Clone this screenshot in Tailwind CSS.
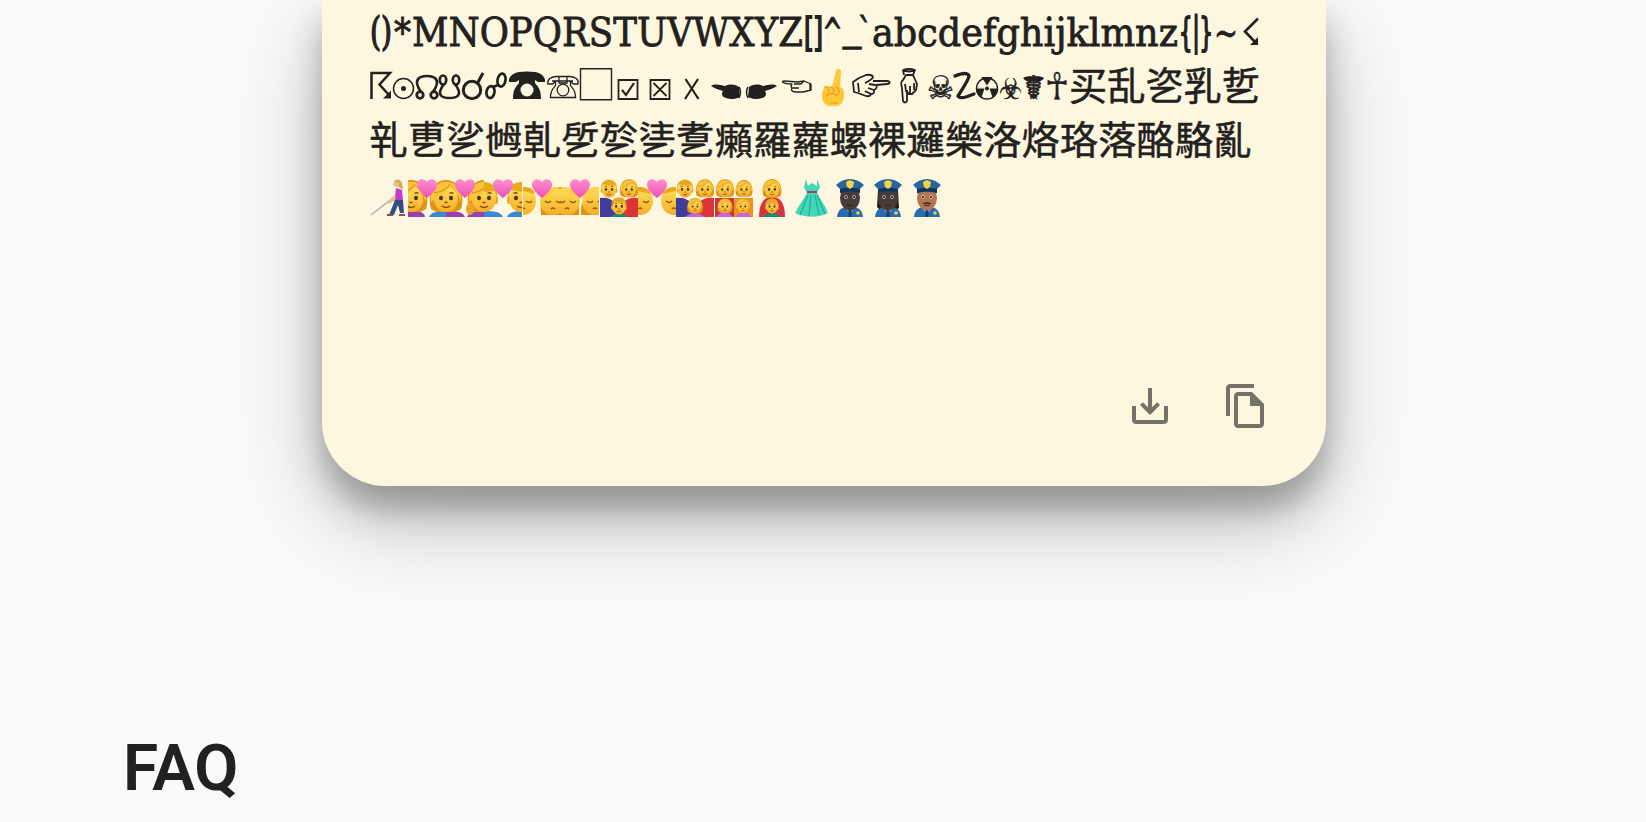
<!DOCTYPE html>
<html lang="en">
<head>
<meta charset="utf-8">
<title>FAQ</title>
<script src="https://cdn.jsdelivr.net/npm/@tailwindcss/browser@4"></script>
</head>
<body class="h-[822px] overflow-hidden bg-[#fafafa] font-[Roboto,sans-serif] text-[#212121]">
<main>
<section class="ml-[322px] flex h-[486px] w-[1004px] flex-col rounded-b-[64px] bg-[#fef7e0] px-12 text-[#22211e] shadow-[0_34px_90px_rgba(0,0,0,0.25),0_24px_30px_rgba(0,0,0,0.25)]">
  <svg class="block h-[60px] w-[908px] shrink-0 overflow-visible font-['DejaVu_Serif']" fill="currentColor" stroke="currentColor" stroke-width=".8" font-size="38.4">
    <text x="0" y="45" stroke-width="1.500" textLength="22" lengthAdjust="spacingAndGlyphs">()</text>
    <text x="24" y="46" textLength="17" lengthAdjust="spacingAndGlyphs">*</text>
    <text x="42" y="46" textLength="391" lengthAdjust="spacingAndGlyphs">MNOPQRSTUVWXYZ</text>
    <text x="434" y="45" stroke-width="1.900" textLength="19" lengthAdjust="spacingAndGlyphs">[]</text>
    <text x="453" y="46" stroke-width="1.500" textLength="19" lengthAdjust="spacingAndGlyphs">^</text>
    <text x="473" y="40" stroke-width="1.700" textLength="18" lengthAdjust="spacingAndGlyphs">_</text>
    <text x="488" y="46" stroke-width="1.200" textLength="14" lengthAdjust="spacingAndGlyphs">`</text>
    <text x="502" y="46" textLength="306" lengthAdjust="spacingAndGlyphs">abcdefghijklmnz</text>
    <text x="809" y="45" stroke-width="2.200" textLength="34" lengthAdjust="spacingAndGlyphs">{|}</text>
    <text x="844" y="46" textLength="24" lengthAdjust="spacingAndGlyphs">~</text>
    <path d="M888 18.500L875 31.500L885 42" fill="none" stroke-width="2.600"/><path d="M880 45l8-8v8z" stroke="none"/>
  </svg>
  <svg class="block h-[54px] w-[908px] shrink-0 overflow-visible font-['DejaVu_Sans']" fill="currentColor" font-size="36">
    <path d="M1.500 39V13H20L9.500 24.500L19 35" fill="none" stroke="currentColor" stroke-width="2.500"/><path d="M13 38.500l8-8v8z"/>
    <circle cx="33.500" cy="28.500" r="10" fill="none" stroke="currentColor" stroke-width="1.500"/><circle cx="33.500" cy="28.500" r="2.500"/>
    <g fill="none" stroke="currentColor" stroke-width="2.700"><circle cx="50" cy="35" r="3.300"/><circle cx="64" cy="35" r="3.300"/><path d="M51 32C42 19 50 16 57 16S72 19 63 32"/><ellipse cx="73" cy="20" rx="3.200" ry="4.500"/><ellipse cx="86" cy="20" rx="3.200" ry="4.500"/><path d="M74 24C65 36 73 38 79.500 38S94 36 85 24"/><circle cx="102" cy="30" r="8.700" stroke-width="3"/><path d="M107 24L113 13" stroke-width="3"/><ellipse cx="120.500" cy="32" rx="4" ry="6" transform="rotate(10 120 32)"/><ellipse cx="131.500" cy="20" rx="4" ry="6.500" transform="rotate(10 131 20)"/><path d="M123 27L128 25"/></g>
    <path d="M143 39c0-10 3-12 6-16v-3l-3 2h-7c-1-5 4-9 10-10 5-.8 11-.8 16 0 6 1 11 5 10 10h-7l-3-2v3c3 4 6 6 6 16z"/><circle cx="157" cy="30" r="6.500" fill="#fef7e0"/>
    <g fill="none" stroke="currentColor" stroke-width="1.300"><path d="M180.500 37.500c0-8 3-9 5-12v-4l-3 2.500h-4.500c-1-5 3-7 8-7.500h14c5 .5 9 2.500 8 7.500h-4.500l-3-2.500v4c2 3 5 4 5 12zM189 17v6h8v-6M182 21h21"/><circle cx="193" cy="30" r="5.800"/></g>
    <path d="M210.500 8.800h31v31h-31z" fill="none" stroke="currentColor" stroke-width="1.400"/>
    <g fill="none" stroke="currentColor" stroke-width="1.800"><path d="M248.500 20h19v19h-19zM280.500 20h19v19h-19zM283.500 23l13 13M296.500 23l-13 13"/><path d="M252 30l4 5 8-12M315.500 19l13 20M328 19l-13 20" stroke-width="2.200"/></g>
    <path d="M341 26c4-3 9-1 14 0 5-2 9-2 14 1l1 10c-4 2-9 3-14 1-4-1-5-4-3-7-4-1-9-3-12-5z"/><path d="M369 27q3 5 0 11" fill="none" stroke="currentColor" stroke-width="1.500"/>
    <path d="M407 26c-4-3-9-1-14 0-5-2-9-2-14 1l-1 10c4 2 9 3 14 1 4-1 5-4 3-7 4-1 9-3 12-5z"/><path d="M378 27q-3 5 0 11" fill="none" stroke="currentColor" stroke-width="1.500"/>
    <g fill="none" stroke="currentColor" stroke-width="1.300" stroke-linejoin="round"><path d="M422 24c-10 0-11-3-8-3l14 1 6-1 7 3v6l-8 2h-8q-5-1-3-4-2-2 0-4zM422 28h7M424 24h7l3-3M440 23v8"/></g>
    <path d="M454 28c3-2 5-2 8-1l4-16c1-3 5-2 5 0l-1 16c3 1 4 3 4 7 0 7-2 11-7 12h-9c-6-2-8-11-4-18z" fill="#ffc735"/><path d="M454 27c3-1 5 1 5 5M460 27c3 0 4 2 4 5M456 36c3-3 8-4 11 0M466 27c5 2 3 7 1 8M460 43h8" fill="none" stroke="#e09a20" stroke-width="1.100"/>
    <g fill="none" stroke="currentColor" stroke-width="1.800" stroke-linejoin="round"><path d="M503 21l14 0c4 0 3 3 0 3l-11 1q2 3-2 5 1 4-3 4-1 3-5 2l-8-3-4-1-1-10 6-4 7-3q6-1 7 2 0 2-8 6M505 25l-6-1M504 30l-6-2M501 34l-6-3M488 23l1 9"/></g>
    <g fill="none" stroke="currentColor" stroke-width="1.800" stroke-linejoin="round"><path d="M537 30v11q-2 3-4 0l-1-13q-2-6 1-8l3-5h7l4 9-1 6-4 4-3 0-3-3-1-7M540 33v-7M544 30v-7M534 15l-1-5q6-2 12 0l-2 5M533 10q6 3 12 0"/></g>
    <text x="557" y="39" font-size="32" textLength="27" lengthAdjust="spacingAndGlyphs" stroke="currentColor" stroke-width=".5">☠</text>
    <path d="M585 16q12-5 14 0 0 3-11 20 2 4 16-2" fill="none" stroke="currentColor" stroke-width="3.300" stroke-linecap="round" stroke-linejoin="round"/>
    <circle cx="617" cy="28.500" r="10.500" fill="none" stroke="currentColor" stroke-width="1.500"/><circle cx="617" cy="28.500" r="2"/><path d="M617 25.500l-5.500-8.500h11zM614.500 28.500h-8.500q0 5 5.500 9zM619.500 28.500h8.500q0 5-5.500 9z"/>
    <text x="629" y="39" font-size="29" textLength="23" lengthAdjust="spacingAndGlyphs" stroke="currentColor" stroke-width=".5">☣</text>
    <text x="652" y="39" font-size="33" textLength="23" lengthAdjust="spacingAndGlyphs" stroke="currentColor" stroke-width=".7">☤</text>
    <text x="675" y="39" font-size="37" textLength="24" lengthAdjust="spacingAndGlyphs" stroke="currentColor" stroke-width=".4">☥</text>
    <text x="699" y="40" class="font-['Noto_Sans_CJK_SC']" stroke="currentColor" stroke-width=".5" font-size="38.200" textLength="191" lengthAdjust="spacing">买乱乲乳乴</text>
  </svg>
  <svg class="block h-[54px] w-[908px] shrink-0 overflow-visible font-['Noto_Sans_CJK_SC']" fill="currentColor" stroke="currentColor" stroke-width=".5" font-size="38.200">
    <text x="-.5" y="40" textLength="882" lengthAdjust="spacing">乵乶乷乸乹乺乻乼乽癩羅蘿螺裸邏樂洛烙珞落酪駱亂</text>
  </svg>
  <svg class="mt-[11px] block h-[38px] w-[572px] shrink-0">
    <defs>
      <linearGradient id="skin" x2="0" y2="1"><stop stop-color="#ffe05c"/><stop offset="1" stop-color="#f6ae27"/></linearGradient>
      <linearGradient id="pink" x2="0" y2="1"><stop stop-color="#ff8fce"/><stop offset="1" stop-color="#ed4fb4"/></linearGradient>
      <g id="heart"><path d="M10 19C4 14 0 10 0 5.500 0 0 7-2 10 3c3-5 10-3 10 2.500C20 10 16 14 10 19z" fill="url(#pink)"/></g>
      <g id="face"><ellipse cx="0" cy="0" rx="12" ry="13" fill="url(#skin)"/><ellipse cx="-5" cy="-1" rx="2" ry="2.300" fill="#4b3217"/><ellipse cx="5" cy="-1" rx="2" ry="2.300" fill="#4b3217"/><path d="M-4 7q4 3 8 0M-1.500 3.500h3M-7.500-5.500q2-1.500 4 0M3.500-5.500q2-1.500 4 0" stroke="#8b4d0f" stroke-width="1.500" fill="none"/></g>
      <g id="woman"><path d="M-15 10C-19-2-14-19 0-19S19-2 15 10L9 13H-9z" fill="#df9418"/><use href="#face"/><path d="M-15 3C-18-24 18-24 15 3Q12-7 5-13-2-5-15 3z" fill="#f9c33a"/><path d="M-12-6Q0-8 4-15" stroke="#d58b19" fill="none"/></g>
      <g id="man"><ellipse cx="-12" cy="1" rx="2" ry="4" fill="#eca323"/><ellipse cx="12" cy="1" rx="2" ry="4" fill="#eca323"/><use href="#face"/><path d="M-13-2C-16-22 16-22 13-2L10-8Q-1-6-10-9z" fill="#e8a91f"/></g>
      <g id="kiss"><ellipse cx="0" cy="0" rx="13" ry="14" fill="url(#skin)"/><path d="M-8 0q3 3 6 0M3 0q3 3 6 0M-2 8q2-2 4 0" stroke="#98580e" stroke-width="1.600" fill="none"/></g>
      <g id="cop"><path d="M1 38C2 29 7 28 14 28s12 1 13 10z" fill="#286cad"/><path d="M9 29l5 6 5-6z" fill="#8cc6ee"/><path d="M14 31v7" stroke="#123d6c" stroke-width="3"/><ellipse cx="14" cy="19" rx="10" ry="12.500" fill="currentColor"/><g fill="#eee"><circle cx="10" cy="18" r="1.700"/><circle cx="18" cy="18" r="1.700"/></g><circle cx="10" cy="18" r="1.100" fill="#180f0c"/><circle cx="18" cy="18" r="1.100" fill="#180f0c"/><path d="M11 26q3 1 6 0" stroke="#351b16" fill="none"/><path d="M0 6C4 2 9 0 14 0s10 2 14 6l-4 4v4q-10-3-20 0v-4z" fill="#2865a0"/><path d="M4 10q10-3 20 0v4q-10-3-20 0z" fill="#123456"/><path d="M10 3l4-2 4 2-1 5-3 2-3-2z" fill="#f5d340"/><circle cx="22" cy="34" r="1.800" fill="#f1cf43"/></g>
      <clipPath id="c1"><path d="M38 0h38v38H38z"/></clipPath><clipPath id="c2"><path d="M76 0h38v38H76z"/></clipPath><clipPath id="c3"><path d="M114 0h38v38h-38z"/></clipPath>
      <clipPath id="c4"><path d="M153 0h37v38h-37z"/></clipPath><clipPath id="c5"><path d="M190 0h39v38h-39z"/></clipPath><clipPath id="c6"><path d="M268 0h38v38h-38z"/></clipPath>
      <clipPath id="c7"><path d="M306 0h38v38h-38z"/></clipPath><clipPath id="c8"><path d="M345 0h38v38h-38z"/></clipPath><clipPath id="c9"><path d="M230 0h38v38h-38z"/></clipPath>
    </defs>
    <path d="M1 36L24 18" stroke="#a7a7a7" stroke-width="1.200"/><path d="M17 23l7-6 3-8 3 2-2 9-9 5z" fill="#e9bf91"/><path d="M26 9l6 2 1 11-8 1z" fill="#c73ad2"/><path d="M25 21h8l1 13h-4l-2-8-4 10h-5z" fill="#344f7f"/><circle cx="27" cy="4.500" r="3.500" fill="#e9bf91"/><path d="M24 2q5-4 8 2l1 7-4-3V4z" fill="#d4aa54"/><path d="M17 36h6M29 36h6" stroke="#8a4c5a" stroke-width="2"/>
    <g clip-path="url(#c1)"><path d="M38 32q17-1 17 6H38z" fill="#993eb4"/><path d="M59 38q2-6 17-6v6z" fill="#3a89d9"/><use href="#woman" x="41" y="20"/><use href="#woman" x="76" y="20"/></g>
    <g clip-path="url(#c2)"><path d="M76 32q17-1 19 6H76zM97 38q2-6 17-6v6z" fill="#993eb4"/><use href="#woman" x="76" y="20"/><use href="#woman" x="114" y="20"/><ellipse cx="100" cy="30" rx="4" ry="6" fill="#eaa529"/></g>
    <g clip-path="url(#c3)"><path d="M114 32q17-1 19 6h-19zM137 38q2-6 15-6v6z" fill="#3a89d9"/><use href="#man" x="114" y="20"/><use href="#man" x="151" y="20"/></g>
    <use href="#heart" x="47" y="0"/><use href="#heart" x="85" y="0"/><use href="#heart" x="123" y="0"/>
    <g clip-path="url(#c4)"><use href="#kiss" x="153" y="22"/><path d="M153 8q10-1 12 7l-12-3z" fill="#e8a91f"/><path d="M171 36q-3-28 19-28v28z" fill="#df9418"/><use href="#kiss" x="183" y="22"/><path d="M171 22q3-15 19-14l-6 5z" fill="#ffd24a"/></g>
    <g clip-path="url(#c5)"><path d="M190 8q21 0 19 28h-19zM211 36q-1-28 20-28v28z" fill="#df9418"/><use href="#kiss" x="197" y="22"/><use href="#kiss" x="225" y="22"/><path d="M190 8q16 0 18 14l-12-9zM212 22q3-15 19-14l-7 6z" fill="#ffd24a"/></g>
    <use href="#heart" x="162" y="0"/><use href="#heart" x="200" y="0"/>
    <g clip-path="url(#c9)"><path d="M230 19q18-2 19 19h-19z" fill="#413b9e"/><path d="M249 38q0-21 19-19v19z" fill="#da3439"/><g transform="translate(239 11) scale(.6)"><use href="#man"/></g><g transform="translate(259 11) scale(.56)"><use href="#woman"/></g><path d="M240 38q9-8 18 0z" fill="#168c74"/><g transform="translate(249 28) scale(.57)"><use href="#man"/></g></g>
    <g clip-path="url(#c6)"><use href="#kiss" x="270" y="22"/><use href="#kiss" x="304" y="22"/><path d="M268 8q10-1 13 7l-13-3zM292 15q5-8 14-7v4z" fill="#e8a91f"/></g><use href="#heart" x="277" y="0"/>
    <g clip-path="url(#c7)"><path d="M306 19q18-2 19 19h-19z" fill="#413b9e"/><path d="M325 38q0-21 19-19v19z" fill="#da3439"/><g transform="translate(315 11) scale(.6)"><use href="#man"/></g><g transform="translate(335 11) scale(.56)"><use href="#woman"/></g><path d="M315 38q10-8 20 0z" fill="#cb64d8"/><g transform="translate(325 28) scale(.48)"><use href="#woman"/></g></g>
    <g clip-path="url(#c8)"><path d="M345 19h19v19h-19z" fill="#ca343c"/><path d="M364 19h19v19h-19z" fill="#ef8f24"/><g transform="translate(355 11) scale(.56)"><use href="#woman"/></g><g transform="translate(374 11) scale(.52)"><use href="#woman"/></g><path d="M346 38q9-10 17 0zM365 38q9-10 17 0z" fill="#cb64d8"/><g transform="translate(355 28) scale(.46)"><use href="#woman"/></g><g transform="translate(373 28) scale(.46)"><use href="#woman"/></g></g>
    <path d="M389 38q0-20 13-20t13 20z" fill="#d83440"/><g transform="translate(402 11) scale(.58)"><use href="#woman"/></g><path d="M392 38q10-8 20 0z" fill="#168c74"/><g transform="translate(402 28) scale(.5)"><use href="#man"/></g>
    <path d="M436 0l2 7 4-3 5 3V0l3 8-3 6c3 6 8 12 11 20-10 5-22 5-33 0 4-8 9-14 12-20l-3-6z" fill="#45d5b8"/><path d="M437 13h10" stroke="#a53f64" stroke-width="2"/><path d="M438 16l-8 20M441 16l-2 21M445 16l4 20M447 16l8 19" stroke="#1cae97" stroke-width="1.200"/>
    <g class="text-[#493c38]"><use href="#cop" x="466" y="0"/><path d="M508 12h20l1 17-3 2h-16l-3-3z" fill="#241f20"/><use href="#cop" x="504" y="0"/></g><g class="text-[#b27752]"><use href="#cop" x="543" y="0"/></g><path d="M552 25q5-4 10 0z" fill="#4c2f20"/>
  </svg>
  <div class="mt-auto mb-14 flex justify-end gap-12 pr-2 text-[#757267]">
    <svg class="size-12" viewBox="0 0 24 24" fill="currentColor"><path d="M19 12v7H5v-7H3v7c0 1.100.9 2 2 2h14c1.100 0 2-.9 2-2v-7h-2zm-6 .67l2.590-2.580L17 11.500l-5 5-5-5 1.410-1.410L11 12.670V3h2v9.670z"/></svg>
    <svg class="size-12" viewBox="0 0 24 24" fill="currentColor"><path d="M16 1H4c-1.100 0-2 .9-2 2v14h2V3h12V1zm-1 4H8c-1.100 0-1.990.9-1.990 2L6 21c0 1.100.89 2 1.990 2H19c1.100 0 2-.9 2-2V11l-6-6zM8 21V7h6v5h5v9H8z"/></svg>
  </div>
</section>
<h2 class="mt-[245px] ml-[123px] text-[64px] leading-[76px] font-semibold tracking-[-0.3px]">FAQ</h2>
</main>
</body>
</html>
